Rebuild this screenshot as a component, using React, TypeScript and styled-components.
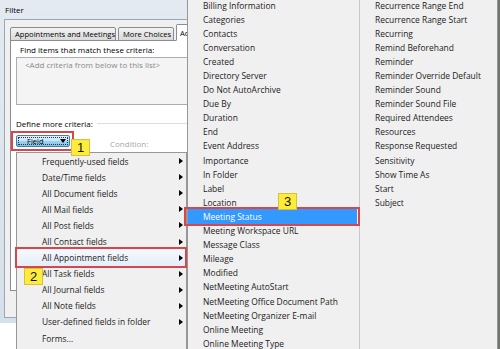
import React from 'react';
import styled, { createGlobalStyle } from 'styled-components';

const GlobalStyle = createGlobalStyle`
  html, body {
    margin: 0;
    padding: 0;
    background: #ffffff;
    overflow: hidden;
  }
  body {
    font-family: 'Open Sans', 'Noto Sans', sans-serif;
    color: #1b1b1b;
  }
`;

const Screen = styled.div`
  position: relative;
  width: 500px;
  height: 349px;
  overflow: hidden;
  background: #ffffff;
`;

/* ---------- dialog behind the menus ---------- */

const Window = styled.div`
  width: 188px;
  height: 323px;
  overflow: hidden;
  display: flex;
  flex-direction: column;
  background: linear-gradient(#e3eaf1, #d6e0ea);
`;

const TitleBar = styled.div`
  height: 19px;
  padding-left: 5px;
  display: flex;
  align-items: center;
  font-size: 8px;
  color: #000000;
`;

const Client = styled.div`
  flex: 1;
  width: 300px;
  margin: 0 0 5px 4px;
  border: 1px solid #9aa8b6;
  border-right: none;
  background: #f0f0f0;
  padding: 4px 0 0 5px;
  display: flex;
  flex-direction: column;
`;

const TabStrip = styled.div`
  display: flex;
  align-items: flex-end;
  gap: 2px;
  height: 17px;
  margin-bottom: -1px;
  position: relative;
  z-index: 1;
`;

const Tab = styled.div<{ $active?: boolean; $width: number }>`
  box-sizing: border-box;
  width: ${(p) => p.$width}px;
  height: ${(p) => (p.$active ? 17 : 14)}px;
  padding-left: ${(p) => (p.$active ? 3 : 4)}px;
  display: flex;
  align-items: center;
  overflow: hidden;
  font-size: 7.6px;
  color: #000000;
  border: 1px solid #898c95;
  border-bottom: ${(p) => (p.$active ? '1px solid #ffffff' : '1px solid #898c95')};
  border-radius: 2px 2px 0 0;
  background: ${(p) =>
    p.$active ? '#ffffff' : 'linear-gradient(#f4f4f4, #e6e6e6 50%, #dadada)'};
  white-space: nowrap;
`;

const TabPanel = styled.div`
  box-sizing: border-box;
  height: 251px;
  background: #ffffff;
  border: 1px solid #898c95;
  padding: 3px 0 0 5px;
  display: flex;
  flex-direction: column;
  font-size: 8px;
  color: #000000;
`;

const FieldLabel = styled.div`
  line-height: 11px;
  margin-left: 4px;
  white-space: nowrap;
`;

const CriteriaBox = styled.div`
  box-sizing: border-box;
  height: 48px;
  margin-top: 2px;
  border: 1px solid #abadb3;
  background: #f4f4f4;
  padding: 1px 8px;
  color: #8a8a8a;
  line-height: 11px;
  white-space: nowrap;
`;

const GroupHeader = styled.div`
  display: flex;
  align-items: center;
  margin-top: 13px;
  line-height: 11px;
  white-space: nowrap;
`;

const GroupLine = styled.div`
  flex: 1;
  margin-left: 4px;
  border-top: 1px solid #d5dfe5;
`;

const FieldRow = styled.div`
  display: flex;
  align-items: center;
  margin-top: 6px;
  height: 12px;
`;

const FieldButton = styled.div`
  position: relative;
  box-sizing: border-box;
  width: 54px;
  height: 12px;
  display: flex;
  align-items: center;
  justify-content: space-between;
  padding: 0 3px 0 10px;
  border: 1px solid #3c7fb1;
  border-radius: 2px;
  background: linear-gradient(#dff1fc 0%, #c6e6fa 48%, #9fd3f2 52%, #7fc1e9 100%);
  font-size: 7.6px;
  color: #000000;

  &::before {
    content: '';
    position: absolute;
    inset: 1px;
    border: 1px dotted #333333;
  }

  &::after {
    content: '';
    position: absolute;
    left: -6px;
    right: -5px;
    top: -5px;
    bottom: -5px;
    border: 2px solid #d6464b;
  }
`;

const Caret = styled.span`
  width: 0;
  height: 0;
  border-left: 3px solid transparent;
  border-right: 3px solid transparent;
  border-top: 4px solid #000000;
`;

const ConditionLabel = styled.span`
  margin-left: 40px;
  margin-top: 4px;
  color: #a6a6a6;
`;

/* ---------- annotation badge ---------- */

const Badge = styled.span<{ $left: number; $top: number }>`
  position: absolute;
  left: ${(p) => p.$left}px;
  top: ${(p) => p.$top}px;
  z-index: 3;
  box-sizing: border-box;
  width: 19px;
  height: 17px;
  display: flex;
  align-items: center;
  justify-content: center;
  background: #fdec3c;
  border: 1px solid #d8c13a;
  font-family: 'Liberation Sans', Arial, sans-serif;
  font-size: 13px;
  color: #111111;
`;

/* ---------- popup menus ---------- */

const FieldsMenu = styled.div`
  position: absolute;
  left: 16px;
  top: 152px;
  width: 171px;
  height: 210px;
  box-sizing: border-box;
  border: 1px solid #979797;
  background: #f0f0f0;
  z-index: 2;
`;

const MenuItem = styled.div<{ $marked?: boolean }>`
  position: relative;
  box-sizing: border-box;
  height: 16.1px;
  display: flex;
  align-items: center;
  justify-content: space-between;
  padding: 0 2px 0 25px;
  font-size: 8.4px;
  white-space: nowrap;
  background: ${(p) => (p.$marked ? 'linear-gradient(#f6f9fd, #e4edf8)' : 'transparent')};

  &::after {
    content: '';
    display: ${(p) => (p.$marked ? 'block' : 'none')};
    position: absolute;
    left: -2px;
    right: -1px;
    top: -3px;
    bottom: -2px;
    border: 2px solid #d6464b;
  }
`;

const Arrow = styled.svg`
  width: 4px;
  height: 6px;
  margin-right: 1px;
`;

const AppointmentMenu = styled.div`
  position: absolute;
  left: 187px;
  top: -3px;
  width: 311px;
  height: 360px;
  box-sizing: border-box;
  border: 1px solid #979797;
  background: #f0f0f0;
  box-shadow: 3px 0 0 #6f766b;
  display: grid;
  grid-template-columns: 171px 1fr;
  z-index: 4;
`;

const MenuColumn = styled.div<{ $divided?: boolean }>`
  display: flex;
  flex-direction: column;
  border-left: ${(p) => (p.$divided ? '1px solid #c9c9c9' : 'none')};
`;

const ListItem = styled.div<{ $selected?: boolean }>`
  position: relative;
  box-sizing: border-box;
  height: 14.1px;
  display: flex;
  align-items: center;
  padding-left: 15px;
  margin-right: ${(p) => (p.$selected ? 2 : 0)}px;
  font-size: 8.45px;
  white-space: nowrap;
  background: ${(p) => (p.$selected ? '#3399ff' : 'transparent')};
  color: ${(p) => (p.$selected ? '#ffffff' : '#1b1b1b')};

  &::after {
    content: '';
    display: ${(p) => (p.$selected ? 'block' : 'none')};
    position: absolute;
    left: -4px;
    right: -3px;
    top: -2.5px;
    bottom: -2.5px;
    border: 2px solid #d6464b;
  }
`;

const fieldGroups = [
  'Frequently-used fields',
  'Date/Time fields',
  'All Document fields',
  'All Mail fields',
  'All Post fields',
  'All Contact fields',
  'All Appointment fields',
  'All Task fields',
  'All Journal fields',
  'All Note fields',
  'User-defined fields in folder',
  'Forms...',
];

const appointmentFieldsA = [
  'Billing Information',
  'Categories',
  'Contacts',
  'Conversation',
  'Created',
  'Directory Server',
  'Do Not AutoArchive',
  'Due By',
  'Duration',
  'End',
  'Event Address',
  'Importance',
  'In Folder',
  'Label',
  'Location',
  'Meeting Status',
  'Meeting Workspace URL',
  'Message Class',
  'Mileage',
  'Modified',
  'NetMeeting AutoStart',
  'NetMeeting Office Document Path',
  'NetMeeting Organizer E-mail',
  'Online Meeting',
  'Online Meeting Type',
];

const appointmentFieldsB = [
  'Recurrence Range End',
  'Recurrence Range Start',
  'Recurring',
  'Remind Beforehand',
  'Reminder',
  'Reminder Override Default',
  'Reminder Sound',
  'Reminder Sound File',
  'Required Attendees',
  'Resources',
  'Response Requested',
  'Sensitivity',
  'Show Time As',
  'Start',
  'Subject',
];

function SubmenuArrow(): JSX.Element {
  return (
    <Arrow viewBox="0 0 4 6">
      <polygon points="0,0 4,3 0,6" fill="#000000" />
    </Arrow>
  );
}

export default function App(): JSX.Element {
  return (
    <>
      <GlobalStyle />
      <Screen>
        <Window>
          <TitleBar>Filter</TitleBar>
          <Client>
            <TabStrip>
              <Tab $width={106}>Appointments and Meetings</Tab>
              <Tab $width={56}>More Choices</Tab>
              <Tab $active $width={14}>Advanced</Tab>
            </TabStrip>
            <TabPanel>
              <FieldLabel>Find items that match these criteria:</FieldLabel>
              <CriteriaBox>&lt;Add criteria from below to this list&gt;</CriteriaBox>
              <GroupHeader>
                Define more criteria:
                <GroupLine />
              </GroupHeader>
              <FieldRow>
                <FieldButton>
                  Field
                  <Caret />
                  <Badge $left={54} $top={3}>1</Badge>
                </FieldButton>
                <ConditionLabel>Condition:</ConditionLabel>
              </FieldRow>
            </TabPanel>
          </Client>
        </Window>

        <FieldsMenu>
          {fieldGroups.map((name) => {
            const marked = name === 'All Appointment fields';
            return (
              <MenuItem key={name} $marked={marked}>
                {name}
                {name !== 'Forms...' && <SubmenuArrow />}
                {marked && <Badge $left={7} $top={18}>2</Badge>}
              </MenuItem>
            );
          })}
        </FieldsMenu>

        <AppointmentMenu>
          <MenuColumn>
            {appointmentFieldsA.map((name) => {
              const selected = name === 'Meeting Status';
              return (
                <ListItem key={name} $selected={selected}>
                  {name}
                  {selected && <Badge $left={90} $top={-16}>3</Badge>}
                </ListItem>
              );
            })}
          </MenuColumn>
          <MenuColumn $divided>
            {appointmentFieldsB.map((name) => (
              <ListItem key={name}>{name}</ListItem>
            ))}
          </MenuColumn>
        </AppointmentMenu>
      </Screen>
    </>
  );
}
